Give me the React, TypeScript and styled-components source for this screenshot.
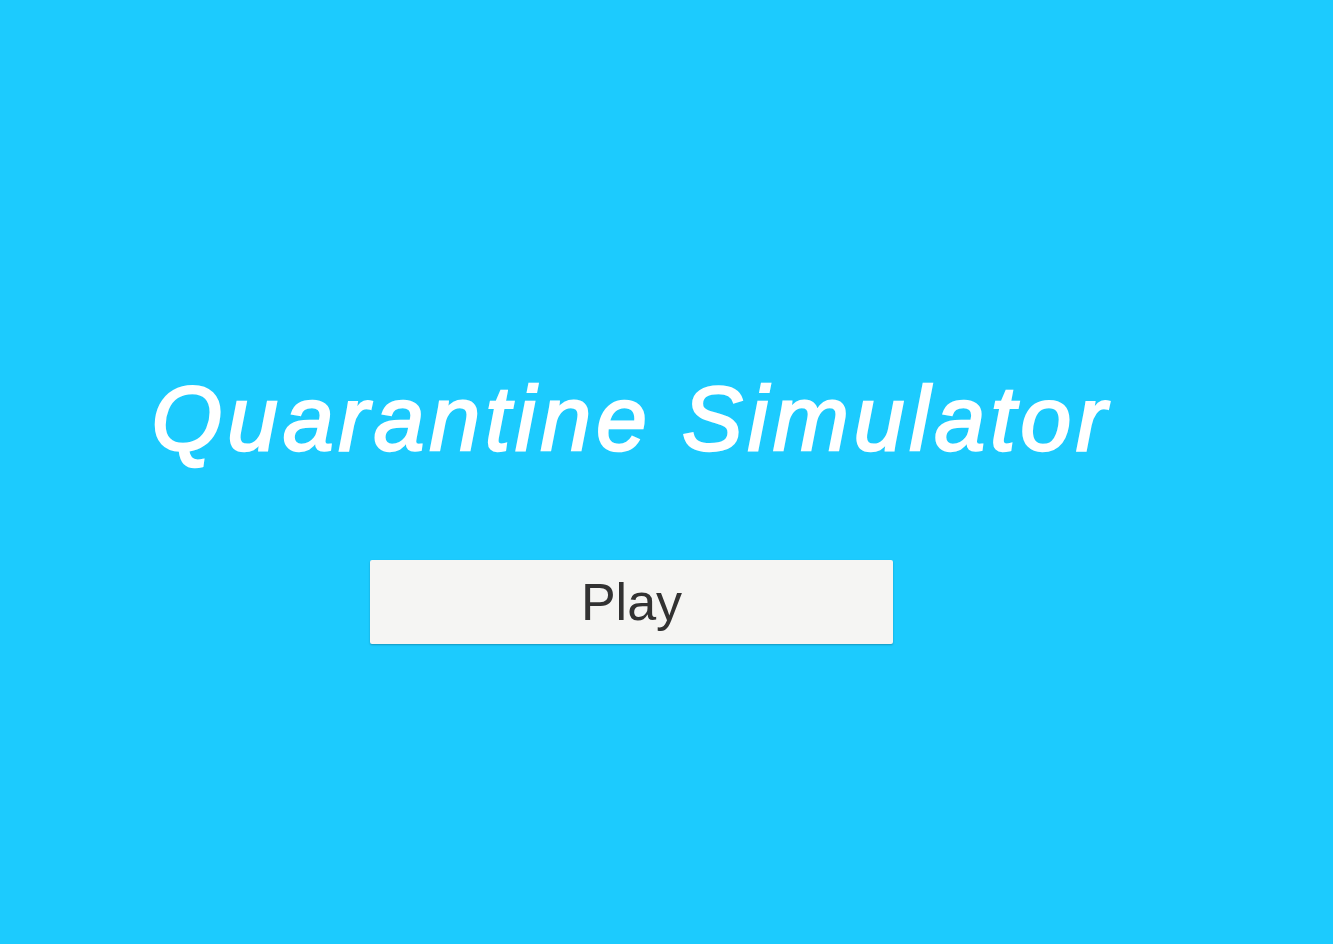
import React from "react";
import styled, { createGlobalStyle } from "styled-components";

const GlobalStyle = createGlobalStyle`
    html, body {
        margin: 0;
        padding: 0;
        background-color: #1ccbfe;
    }
`;

const Screen = styled.main`
    display: flex;
    flex-direction: column;
    align-items: center;
    width: 100vw;
    height: 100vh;
    box-sizing: border-box;
    padding: 373px 70px 0 0;
    background-color: #1ccbfe;
    overflow: hidden;
`;

const Title = styled.h1`
    margin: 0;
    font-family: "Liberation Sans", Arial, sans-serif;
    font-size: 91px;
    font-weight: 400;
    font-style: italic;
    letter-spacing: 5px;
    line-height: 1;
    color: #ffffff;
    -webkit-text-stroke: 2.5px #ffffff;
    white-space: nowrap;
`;

const PlayButton = styled.button`
    margin-top: 96px;
    width: 523px;
    height: 84px;
    border: none;
    border-radius: 2px;
    background-color: #f5f5f3;
    box-shadow: 0 1px 2px rgba(0, 0, 0, 0.25);
    font-family: "Liberation Sans", Arial, sans-serif;
    font-size: 52px;
    color: #323232;
    cursor: pointer;
`;

const App = () => {
    return (
        <>
            <GlobalStyle/>
            <Screen>
                <Title>Quarantine Simulator</Title>
                <PlayButton>Play</PlayButton>
            </Screen>
        </>
    )
}

export default App;
